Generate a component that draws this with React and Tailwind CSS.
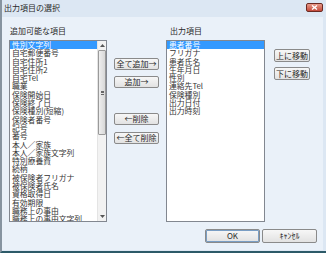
import React from "react";

const leftItems = [
  "性別文字列",
  "自宅郵便番号",
  "自宅住所1",
  "自宅住所2",
  "自宅Tel",
  "職業",
  "保険開始日",
  "保険終了日",
  "保険種別(短縮)",
  "保険者番号",
  "記号",
  "番号",
  "本人／家族",
  "本人／家族文字列",
  "特別療養費",
  "続柄",
  "被保険者フリガナ",
  "被保険者氏名",
  "資格取得日",
  "有効期限",
  "職務上の事由",
  "職務上の事由文字列",
];

const rightItems = [
  "患者番号",
  "フリガナ",
  "患者氏名",
  "生年月日",
  "性別",
  "連絡先Tel",
  "保険種別",
  "出力日付",
  "出力時刻",
];

function Btn({ children, className = "" }) {
  return (
    <div
      className={
        "flex items-center justify-center rounded-[2px] border border-[#8a8a8a] bg-gradient-to-b from-[#f7f7f7] to-[#e2e2e2] text-[8px] leading-[10px] text-[#2a2a2a] " +
        className
      }
    >
      {children}
    </div>
  );
}

function Item({ text, selected }) {
  return (
    <div
      className={
        "h-[8.3px] leading-[8.3px] pl-[2px] whitespace-nowrap text-[7.8px] " +
        (selected ? "bg-[#3399ff] text-white" : "text-[#333333]")
      }
    >
      {text}
    </div>
  );
}

export default function App() {
  return (
    <div className="w-[326px] h-[253px] flex flex-col overflow-hidden bg-[#dce7f3] border-b-[2px] border-b-[#2c5a68] border-l-[2px] border-l-[#8794a0] font-['Noto_Sans_CJK_JP','Liberation_Sans',sans-serif]">
      {/* Title bar */}
      <div className="h-[17px] flex items-start shrink-0">
        <div className="pl-[2px] pt-[3px] text-[8px] leading-[10px] text-[#2a2a2a]">
          出力項目の選択
        </div>
        <div className="ml-auto mt-[3px] mr-[3px] w-[17px] h-[9px] rounded-[2px] border border-[#6b2a22] bg-gradient-to-b from-[#e79a8a] to-[#c4483a] flex items-center justify-center">
          <svg width="7" height="5" viewBox="0 0 7 5">
            <path d="M1 0.5 L6 4.5 M6 0.5 L1 4.5" stroke="white" strokeWidth="1.4" />
          </svg>
        </div>
      </div>

      {/* Client */}
      <div className="flex-1 mr-[3px] mb-[1px] bg-[#eaf1f9] flex flex-col pl-[7px] pt-[9px]">
        <div className="flex items-start">
          {/* Left column */}
          <div className="w-[98px] flex flex-col">
            <div className="h-[10px] leading-[10px] text-[8px] pl-[1px] text-[#2a2a2a] mb-[4px]">
              追加可能な項目
            </div>
            <div className="h-[182px] border border-[#828790] bg-white flex overflow-hidden">
              <div className="flex-1 overflow-hidden">
                {leftItems.map((t, i) => (
                  <Item key={t} text={t} selected={i === 0} />
                ))}
              </div>
              <div className="w-[9px] flex flex-col bg-[#f2f2f2] border-l border-[#e4e4e4]">
                <div className="h-[9px] flex items-center justify-center">
                  <svg width="5" height="3" viewBox="0 0 5 3">
                    <path d="M0 3 L2.5 0 L5 3 Z" fill="#555" />
                  </svg>
                </div>
                <div className="h-[85px] border border-[#9a9a9a] rounded-[1px] bg-gradient-to-r from-[#eeeeee] to-[#d8d8d8] flex items-center justify-center">
                  <div className="flex flex-col gap-[1px]">
                    <div className="w-[3px] h-[0.5px] bg-[#666]" />
                    <div className="w-[3px] h-[0.5px] bg-[#666]" />
                    <div className="w-[3px] h-[0.5px] bg-[#666]" />
                  </div>
                </div>
                <div className="flex-1" />
                <div className="h-[9px] flex items-center justify-center">
                  <svg width="5" height="3" viewBox="0 0 5 3">
                    <path d="M0 0 L2.5 3 L5 0 Z" fill="#555" />
                  </svg>
                </div>
              </div>
            </div>
          </div>

          {/* Middle buttons */}
          <div className="ml-[7px] w-[45px] pt-[32px] flex flex-col">
            <Btn className="h-[12px]">全て追加→</Btn>
            <Btn className="h-[12px] mt-[6px]">追加→</Btn>
            <Btn className="h-[12px] mt-[25px]">←削除</Btn>
            <Btn className="h-[12px] mt-[7px]">←全て削除</Btn>
          </div>

          {/* Right column */}
          <div className="ml-[7px] w-[99px] flex flex-col">
            <div className="h-[10px] leading-[10px] text-[8px] pl-[4px] text-[#2a2a2a] mb-[4px]">
              出力項目
            </div>
            <div className="h-[182px] border border-[#828790] bg-white overflow-hidden">
              {rightItems.map((t, i) => (
                <Item key={t} text={t} selected={i === 0} />
              ))}
            </div>
          </div>

          {/* Far right buttons */}
          <div className="ml-[9px] w-[36px] pt-[23px] flex flex-col">
            <Btn className="h-[13px]">上に移動</Btn>
            <Btn className="h-[13px] mt-[5px]">下に移動</Btn>
          </div>
        </div>

        {/* Bottom buttons */}
        <div className="flex justify-end mt-[7px] pr-[6px] gap-[2px]">
          <Btn className="w-[55px] h-[14px] border-[#3c3c3c] shadow-[inset_0_0_0_1px_#7a9ec4]">OK</Btn>
          <Btn className="w-[55px] h-[14px]">ｷｬﾝｾﾙ</Btn>
        </div>
      </div>
    </div>
  );
}
